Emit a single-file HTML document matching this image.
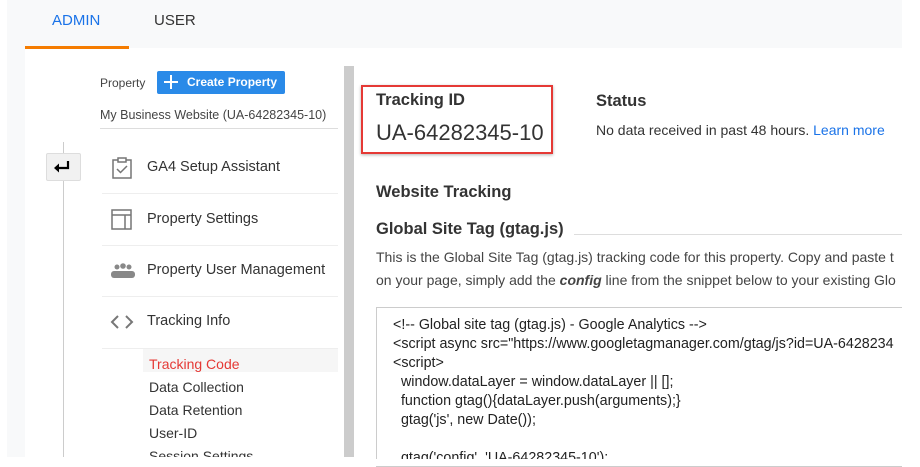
<!DOCTYPE html>
<html><head><style>
*{margin:0;padding:0;box-sizing:border-box}
body{width:920px;height:466px;background:#fff;position:relative;overflow:hidden;font-family:"Liberation Sans",Arial,sans-serif;color:#333}
.a{position:absolute}
</style></head><body>
<div class="a" style="left:7px;top:0;width:895px;height:457px;background:#f8f9fa"></div>
<div class="a" style="left:25px;top:48px;width:877px;height:409px;background:#fff"></div>
<div class="a" style="left:25px;top:46px;width:104px;height:3px;background:#f57c00"></div>
<div class="a" style="left:52px;top:12px;font-size:15px;color:#1a73e8">ADMIN</div>
<div class="a" style="left:154px;top:12px;font-size:15px;color:#333">USER</div>
<div class="a" style="left:344px;top:66px;width:10px;height:391px;background:#ccc"></div>
<div class="a" style="left:100px;top:76px;font-size:12px;color:#444">Property</div>
<div class="a" style="left:157px;top:71px;width:128px;height:23px;background:#2a8ae8;border-radius:2px;color:#fff;font-size:12px;font-weight:bold;line-height:23px;padding-left:30px">Create Property</div>
<div class="a" style="left:164px;top:81px;width:14px;height:2px;background:#fff"></div>
<div class="a" style="left:170px;top:75px;width:2px;height:14px;background:#fff"></div>
<div class="a" style="left:100px;top:108px;font-size:12.5px;color:#444">My Business Website (UA-64282345-10)</div>
<div class="a" style="left:100px;top:128px;width:238px;height:1px;background:#ddd"></div>
<div class="a" style="left:63px;top:142px;width:1px;height:320px;background:#ccc"></div>
<div class="a" style="left:46px;top:153px;width:35px;height:28px;background:#f1f1f1;border:1px solid #ddd;border-radius:2px"></div>
<svg class="a" style="left:53px;top:159px" width="20" height="16" viewBox="0 0 20 16"><path d="M15 2v7H5" fill="none" stroke="#000" stroke-width="2.2"/><path d="M1 9l5-4.5v9z" fill="#000"/></svg>
<svg class="a" style="left:111px;top:157px" width="22" height="22" viewBox="0 0 22 22"><rect x="2" y="3" width="18" height="18" fill="none" stroke="#757575" stroke-width="1.5"/><rect x="7" y="1" width="8" height="4" fill="#fff" stroke="#757575" stroke-width="1.5"/><path d="M6 12l3.5 3.5L16 9" fill="none" stroke="#757575" stroke-width="1.5"/></svg>
<div class="a" style="left:147px;top:159px;font-size:14.5px;color:#333">GA4 Setup Assistant</div>
<div class="a" style="left:102px;top:193px;width:236px;height:1px;background:#eee"></div>
<svg class="a" style="left:111px;top:209px" width="22" height="22" viewBox="0 0 22 22"><rect x="1" y="1" width="19" height="19" fill="none" stroke="#757575" stroke-width="1.5"/><path d="M1 6h19M14 6v14" stroke="#757575" stroke-width="1.5"/></svg>
<div class="a" style="left:147px;top:211px;font-size:14.5px;color:#333">Property Settings</div>
<div class="a" style="left:102px;top:245px;width:236px;height:1px;background:#eee"></div>
<svg class="a" style="left:110px;top:263px" width="26" height="16" viewBox="0 0 26 16"><circle cx="7" cy="4" r="2.5" fill="#888"/><circle cx="13" cy="3" r="2.8" fill="#888"/><circle cx="19" cy="4" r="2.5" fill="#888"/><rect x="1" y="8" width="24" height="7" rx="3" fill="#888"/></svg>
<div class="a" style="left:147px;top:262px;font-size:14.5px;color:#333">Property User Management</div>
<div class="a" style="left:102px;top:296px;width:236px;height:1px;background:#eee"></div>
<svg class="a" style="left:110px;top:314px" width="24" height="16" viewBox="0 0 24 16"><path d="M8 2L2 8l6 6M16 2l6 6-6 6" fill="none" stroke="#777" stroke-width="2"/></svg>
<div class="a" style="left:147px;top:313px;font-size:14.5px;color:#333">Tracking Info</div>
<div class="a" style="left:102px;top:348px;width:236px;height:1px;background:#eee"></div>
<div class="a" style="left:143px;top:349px;width:195px;height:23px;background:#f6f6f6"></div>
<div class="a" style="left:149px;top:356px;font-size:14px;color:#e53935">Tracking Code</div>
<div class="a" style="left:149px;top:379px;font-size:14px;color:#333">Data Collection</div>
<div class="a" style="left:149px;top:402px;font-size:14px;color:#333">Data Retention</div>
<div class="a" style="left:149px;top:425px;font-size:14px;color:#333">User-ID</div>
<div class="a" style="left:149px;top:448px;font-size:14px;color:#333">Session Settings</div>
<div class="a" style="left:0;top:457px;width:920px;height:9px;background:#fff"></div>
<div class="a" style="left:361px;top:85px;width:192px;height:69px;border:2px solid #e53935;box-shadow:0 1px 3px rgba(0,0,0,.3)"></div>
<div class="a" style="left:376px;top:91px;font-size:16.5px;font-weight:bold;color:#333">Tracking ID</div>
<div class="a" style="left:376px;top:120px;font-size:22px;color:#333">UA-64282345-10</div>
<div class="a" style="left:596px;top:92px;font-size:16.5px;font-weight:bold;color:#333">Status</div>
<div class="a" style="left:596px;top:122px;font-size:14px;color:#333;white-space:nowrap">No data received in past 48 hours. <span style="color:#1a73e8">Learn more</span></div>
<div class="a" style="left:376px;top:183px;font-size:16.5px;font-weight:bold;color:#333">Website Tracking</div>
<div class="a" style="left:376px;top:220px;font-size:16.5px;font-weight:bold;color:#333">Global Site Tag (gtag.js)</div>
<div class="a" style="left:574px;top:234px;width:328px;height:1px;background:#ddd"></div>
<div class="a" style="left:376px;top:246px;width:526px;overflow:hidden;font-size:14px;color:#444;white-space:nowrap;line-height:23px">This is the Global Site Tag (gtag.js) tracking code for this property. Copy and paste t<br>on your page, simply add the <b><i>config</i></b> line from the snippet below to your existing Glo</div>
<div class="a" style="left:376px;top:307px;width:526px;height:160px;border:1px solid #ccc;border-right:none;overflow:hidden">
<div style="position:absolute;left:16px;top:8px;font-size:14.3px;color:#222;white-space:nowrap;line-height:19px">&lt;!-- Global site tag (gtag.js) - Google Analytics --&gt;<br>&lt;script async src="https://www.googletagmanager.com/gtag/js?id=UA-6428234<br>&lt;script&gt;<br>&nbsp;&nbsp;window.dataLayer = window.dataLayer || [];<br>&nbsp;&nbsp;function gtag(){dataLayer.push(arguments);}<br>&nbsp;&nbsp;gtag('js', new Date());<br><br>&nbsp;&nbsp;gtag('config', 'UA-64282345-10');</div></div>
<div class="a" style="left:360px;top:459px;width:560px;height:7px;background:#fff"></div>
</body></html>
